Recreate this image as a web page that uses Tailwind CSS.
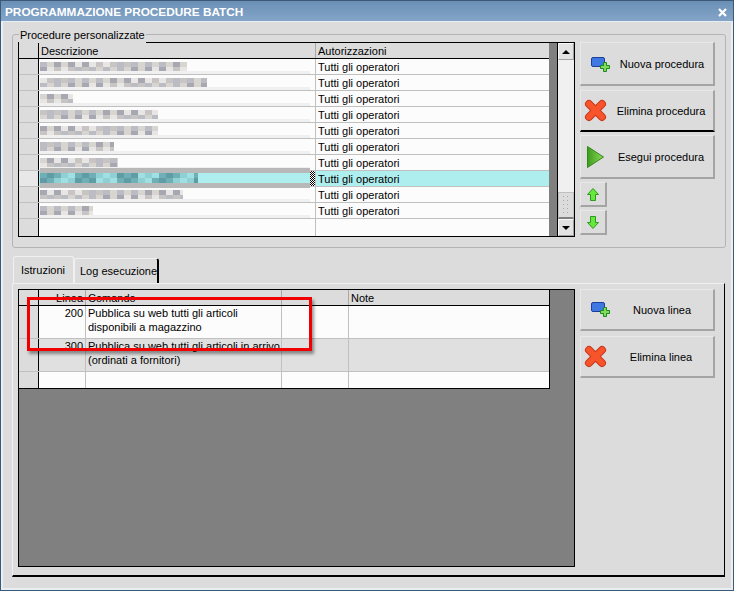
<!DOCTYPE html>
<html lang="en">
<head>
    <meta charset="UTF-8">
    <title>Programmazione procedure batch</title>
    <script src="https://cdn.jsdelivr.net/npm/@tailwindcss/browser@4"></script>
</head>
<body class="bg-[#dcdcdc] overflow-hidden">
<div class="relative w-[734px] h-[591px] flex flex-col bg-[#dcdcdc] font-['Liberation_Sans',sans-serif] text-[11px] leading-[15px] text-black border border-[#3c5a78] overflow-hidden">
    <!-- Title bar -->
    <div class="h-[21px] shrink-0 flex items-center justify-between pl-[4px] pr-[5px] pt-[2px] bg-gradient-to-b from-[#6a8fb6] to-[#84a5c8] border-b border-[#e6edf3]">
        <span class="font-bold text-[11.8px] text-white">PROGRAMMAZIONE PROCEDURE BATCH</span>
        <span class="w-[10px] h-[10px] mr-[1px] flex items-center justify-center">
            <svg width="9" height="9" viewBox="0 0 9 9"><path d="M1 1L8 8M8 1L1 8" stroke="#fff" stroke-width="2.2"/></svg>
        </span>
    </div>

    <div class="flex-1 flex flex-col border-x-2 border-b-2 border-[#e8eef2]">
        <!-- Group box -->
        <div class="relative ml-[9px] mt-[12px] w-[714px] h-[214px] shrink-0 border border-[#b4b4b4] rounded-[3px] pl-[5px] pt-[7px] flex gap-[5px]">
            <span class="absolute left-[6px] top-[-7px] bg-[#dcdcdc] px-[1px]">Procedure personalizzate</span>

            <!-- Top grid -->
            <div class="w-[557px] h-[195px] border border-black flex bg-[#808080]">
                <div class="w-[530px] flex flex-col bg-[#fcfcfc]" id="topGrid">
                    <div class="h-[16px] shrink-0 flex bg-[#dcdcdc] border-b border-black">
                        <div class="w-[20px] border-r border-black"></div>
                        <div class="w-[277px] pl-[2px] pt-[1px] border-r border-[#a8a8a8]">Descrizione</div>
                        <div class="flex-1 pl-[2px] pt-[1px]">Autorizzazioni</div>
                    </div>
                </div>
                <div class="w-[8px]"></div>
                <!-- Scrollbar -->
                <div class="flex-1 flex flex-col bg-[#f0f0f0] border-l border-black">
                    <div class="h-[17px] bg-[#e2e2e2] border border-[#f8f8f8] border-b-[#a0a0a0] border-r-[#a0a0a0] flex items-center justify-center">
                        <span class="w-0 h-0 border-x-[4px] border-x-transparent border-b-[4px] border-b-black"></span>
                    </div>
                    <div class="flex-1"></div>
                    <div class="h-[27px] bg-[#dcdcdc] border border-[#c0c0c0] border-b-[2px] border-b-[#808080] flex items-center justify-center">
                        <svg width="8" height="23" viewBox="0 0 8 23"><path d="M1 2h1v1H1zM5 2h1v1H5zM1 6h1v1H1zM5 6h1v1H5zM1 10h1v1H1zM5 10h1v1H5zM1 14h1v1H1zM5 14h1v1H5zM1 18h1v1H1zM5 18h1v1H5z" fill="#a8a8a8"/></svg>
                    </div>
                    <div class="h-[17px] bg-[#e2e2e2] border border-[#f8f8f8] border-b-[#a0a0a0] border-r-[#a0a0a0] flex items-center justify-center">
                        <span class="w-0 h-0 border-x-[4px] border-x-transparent border-t-[4px] border-t-black"></span>
                    </div>
                </div>
            </div>

            <!-- Top buttons -->
            <div class="w-[135px] flex flex-col">
                <button class="h-[44px] pt-[2px] flex items-center bg-[#dcdcdc] border border-[#e8e8e8] border-r-2 border-b-2 border-r-[#a4a4a4] border-b-[#a4a4a4]">
                    <span class="w-[28px] ml-[6px] flex justify-center"><svg width="20" height="18" viewBox="0 0 20 18"><rect x="0.5" y="1.5" width="13" height="9" rx="1.5" fill="#3f78e0" stroke="#1c3f9c"/><path d="M12.5 6.5h3v3h3v3h-3v3h-3v-3h-3v-3h3z" fill="#7fdc5a" stroke="#1a8a1a"/></svg></span>
                    <span class="flex-1 text-center pr-[4px]">Nuova procedura</span>
                </button>
                <button class="h-[42px] mt-[4px] flex items-center bg-[#dcdcdc] border border-[#e8e8e8] border-r-2 border-r-[#a4a4a4] border-b-2 border-b-black">
                    <span class="w-[28px] flex justify-center"><svg width="23" height="23" viewBox="0 0 23 23"><path d="M5 5L18 18M18 5L5 18" stroke="#c8361a" stroke-width="8" stroke-linecap="round"/><path d="M5 5L18 18M18 5L5 18" stroke="#f8542c" stroke-width="6" stroke-linecap="round"/></svg></span>
                    <span class="flex-1 text-center pt-[1px]">Elimina procedura</span>
                </button>
                <button class="h-[44px] mt-[3px] flex items-center bg-[#dcdcdc] border border-[#e8e8e8] border-r-2 border-b-2 border-r-[#a4a4a4] border-b-[#a4a4a4]">
                    <span class="w-[28px] flex justify-center">
                        <svg width="19" height="24" viewBox="0 0 19 24"><defs><linearGradient id="play" x1="0" y1="0" x2="1" y2="0"><stop offset="0" stop-color="#3c9c1c"/><stop offset="1" stop-color="#8ed85a"/></linearGradient></defs><path d="M1.5 1.5L17.5 12L1.5 22.5z" fill="url(#play)" stroke="#2f8a1a" stroke-linejoin="round"/></svg>
                    </span>
                    <span class="flex-1 text-center pt-[2px]">Esegui procedura</span>
                </button>
                <button class="w-[27px] h-[25px] mt-[3px] flex items-center justify-center bg-[#dcdcdc] border border-[#e8e8e8] border-r-2 border-b-2 border-r-[#a4a4a4] border-b-[#a4a4a4]">
                    <svg width="12" height="13" viewBox="0 0 12 13"><path d="M6 0.5L11.5 6.5H8.5V12.5H3.5V6.5H0.5z" fill="#66e83c" stroke="#2c9a1c"/></svg>
                </button>
                <button class="w-[27px] h-[25px] mt-[3px] flex items-center justify-center bg-[#dcdcdc] border border-[#e8e8e8] border-r-2 border-b-2 border-r-[#a4a4a4] border-b-[#a4a4a4]">
                    <svg width="12" height="13" viewBox="0 0 12 13"><path d="M6 12.5L11.5 6.5H8.5V0.5H3.5V6.5H0.5z" fill="#66e83c" stroke="#2c9a1c"/></svg>
                </button>
            </div>
        </div>

        <!-- Tabs -->
        <div class="ml-[10px] mt-[8px] h-[27px] shrink-0 flex items-end">
            <div class="w-[61px] h-[27px] pl-[7px] pt-[6px] border border-b-0 border-[#f0f0f0] rounded-t-[3px]">Istruzioni</div>
            <div class="w-[85px] h-[25px] pl-[5px] pt-[5px] whitespace-nowrap border-l border-t border-[#f0f0f0] border-r-2 border-r-black rounded-t-[3px]">Log esecuzione</div>
        </div>

        <!-- Tab panel -->
        <div class="ml-[9px] w-[713px] h-[294px] shrink-0 border border-t-[#f0f0f0] border-l-[#f0f0f0] border-r-black border-b-2 border-b-black pl-[5px] pt-[5px] flex gap-[5px]">
            <!-- Bottom grid -->
            <div class="w-[557px] h-[278px] border border-black bg-[#808080]">
                <div class="w-[531px] h-[99px] flex flex-col border-r border-b border-black bg-[#fcfcfc]">
                    <div class="h-[16px] shrink-0 flex bg-[#dcdcdc] border-b border-black">
                        <div class="w-[20px] border-r border-black"></div>
                        <div class="w-[47px] pr-[2px] pt-[1px] text-right border-r border-[#a8a8a8]">Linea</div>
                        <div class="w-[196px] pl-[2px] pt-[1px] border-r border-[#a8a8a8]">Comando</div>
                        <div class="w-[67px] border-r border-[#a8a8a8]"></div>
                        <div class="flex-1 pl-[2px] pt-[1px]">Note</div>
                    </div>
                    <div class="h-[33px] shrink-0 flex border-b border-[#c0c0c0]">
                        <div class="w-[20px] bg-[#dcdcdc] border-r border-black"></div>
                        <div class="w-[47px] pr-[2px] text-right border-r border-[#c0c0c0]">200</div>
                        <div class="w-[196px] pl-[2px] leading-[14px] border-r border-[#c0c0c0]">Pubblica su web tutti gli articoli<br>disponibili a magazzino</div>
                        <div class="w-[67px] border-r border-[#c0c0c0]"></div>
                        <div class="flex-1"></div>
                    </div>
                    <div class="h-[33px] shrink-0 flex bg-[#e0e0e0] border-b border-[#c0c0c0]">
                        <div class="w-[20px] bg-[#dcdcdc] border-r border-black"></div>
                        <div class="w-[47px] pr-[2px] text-right border-r border-[#c0c0c0]">300</div>
                        <div class="w-[196px] pl-[2px] leading-[14px] border-r border-[#c0c0c0]">Pubblica su web tutti gli articoli in arrivo<br>(ordinati a fornitori)</div>
                        <div class="w-[67px] border-r border-[#c0c0c0]"></div>
                        <div class="flex-1"></div>
                    </div>
                    <div class="flex-1 flex">
                        <div class="w-[20px] bg-[#dcdcdc] border-r border-black"></div>
                        <div class="w-[47px] border-r border-[#c0c0c0]"></div>
                        <div class="w-[196px] border-r border-[#c0c0c0]"></div>
                        <div class="w-[67px] border-r border-[#c0c0c0]"></div>
                        <div class="flex-1"></div>
                    </div>
                </div>
            </div>
            <!-- Bottom buttons -->
            <div class="w-[135px] flex flex-col">
                <button class="h-[42px] flex items-center bg-[#dcdcdc] border border-[#e8e8e8] border-r-2 border-b-2 border-r-[#a4a4a4] border-b-[#a4a4a4]">
                    <span class="w-[28px] ml-[6px] flex justify-center"><svg width="20" height="18" viewBox="0 0 20 18"><rect x="0.5" y="1.5" width="13" height="9" rx="1.5" fill="#3f78e0" stroke="#1c3f9c"/><path d="M12.5 6.5h3v3h3v3h-3v3h-3v-3h-3v-3h3z" fill="#7fdc5a" stroke="#1a8a1a"/></svg></span>
                    <span class="flex-1 text-center pr-[4px] pt-[2px]">Nuova linea</span>
                </button>
                <button class="h-[42px] mt-[5px] flex items-center bg-[#dcdcdc] border border-[#e8e8e8] border-r-2 border-b-2 border-r-[#a4a4a4] border-b-[#a4a4a4]">
                    <span class="w-[28px] flex justify-center"><svg width="23" height="23" viewBox="0 0 23 23"><path d="M5 5L18 18M18 5L5 18" stroke="#c8361a" stroke-width="8" stroke-linecap="round"/><path d="M5 5L18 18M18 5L5 18" stroke="#f8542c" stroke-width="6" stroke-linecap="round"/></svg></span>
                    <span class="flex-1 text-center pt-[2px]">Elimina linea</span>
                </button>
            </div>
        </div>
    </div>

    <!-- Red highlight drawn over the lower grid -->
    <div class="absolute left-[26px] top-[296px] w-[285px] h-[54px] border-[3px] border-[#f00000] shadow-[2px_3px_3px_rgba(0,0,0,0.4)]"></div>
</div>

<script>
    // blurred descriptions: [width of the smudge in px, selected]
    const rows = [[147], [167], [33], [118], [118], [74], [78], [158, true], [143], [53]];
    const topGrid = document.getElementById('topGrid');

    function smudge(width, seed, selected) {
        let rects = '';
        for (let band = 0; band < 2; band++) {
            for (let x = 0; x < width; x += 7) {
                const n = (x * 13 + seed * 37 + band * 53) % 17;
                const shade = selected
                    ? ['#6fb0b6', '#8fd0d4', '#5f9ca6', '#a0e0e2'][n % 4]
                    : ['#bcbcc4', '#d8d4d0', '#a8a8b2', '#e8e6e4', '#c8c4c4'][n % 5];
                rects += `<rect x="${x}" y="${band * 5}" width="7" height="5" fill="${shade}"/>`;
            }
        }
        return `<svg width="${width}" height="10" class="block">${rects}</svg>`;
    }

    rows.forEach((row, i) => {
        const selected = row[1] === true;
        const el = document.createElement('div');
        el.className = 'h-[16px] shrink-0 flex border-b border-[#c0c0c0]';
        const desc = selected
            ? `<div class="relative z-10 w-[270px] h-[20px] -mt-[3px] flex items-center border-y-[5px] border-[#b8b8b8] bg-[#aeeeee]">${smudge(row[0], i, true)}</div>
               <div class="w-[5px] h-full bg-[repeating-conic-gradient(#000_0%_25%,#fff_0%_50%)] bg-size-[2px_2px]"></div>`
            : `<div class="w-[270px] h-full pt-[3px] border-b-[3px] border-[#f0f0f0] overflow-hidden">${smudge(row[0], i, false)}</div>`;
        el.innerHTML = `
            <div class="w-[20px] border-r border-black ${selected ? 'bg-[#e8e8e8]' : 'bg-[#dcdcdc]'}"></div>
            <div class="w-[277px] flex pl-[1px] border-r border-[#c0c0c0] ${selected ? 'bg-[#aeeeee]' : ''}">${desc}</div>
            <div class="flex-1 pl-[2px] pt-[1px] ${selected ? 'bg-[#aeeeee]' : ''}">Tutti gli operatori</div>`;
        topGrid.appendChild(el);
    });

    const last = document.createElement('div');
    last.className = 'flex-1 flex';
    last.innerHTML = `
        <div class="w-[20px] bg-[#dcdcdc] border-r border-black"></div>
        <div class="w-[277px] border-r border-[#c0c0c0]"></div>`;
    topGrid.appendChild(last);
</script>
</body>
</html>
